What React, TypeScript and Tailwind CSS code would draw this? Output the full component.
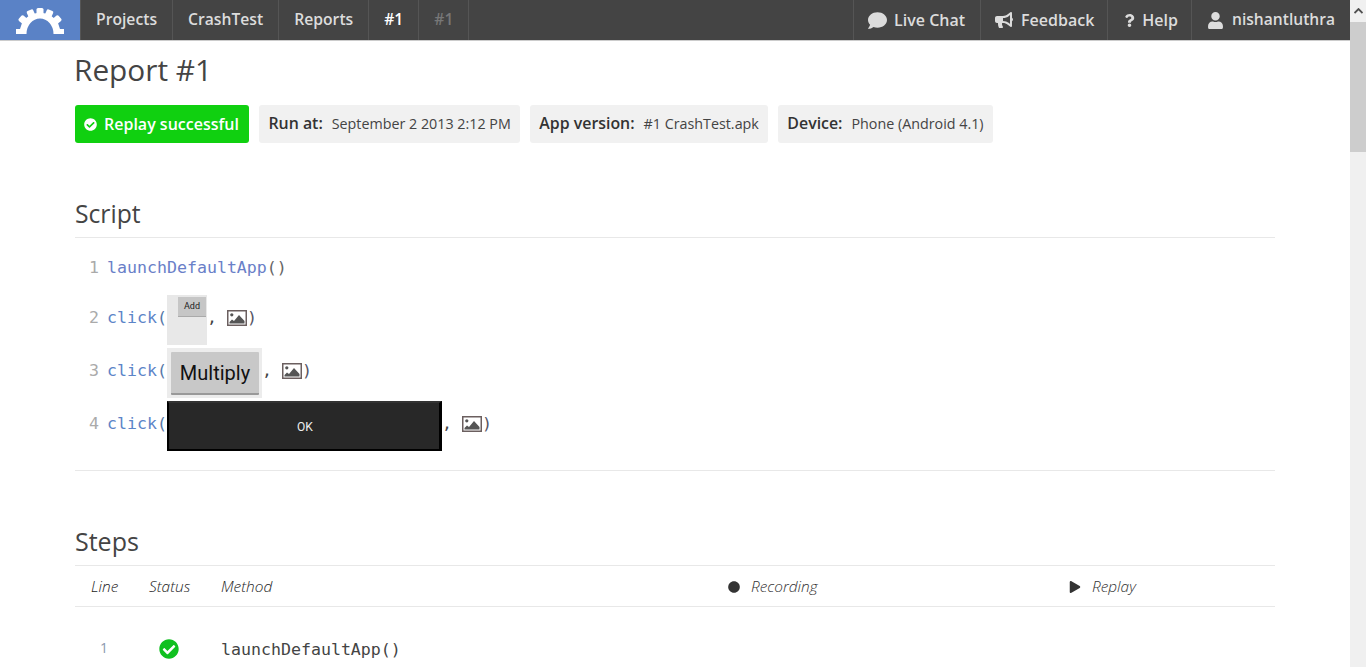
import { FaBullhorn, FaCheckCircle, FaCircle, FaComment, FaPlay, FaQuestion, FaUser } from 'react-icons/fa';
import type { ReactNode } from 'react';

const sans = { fontFamily: '"Open Sans", sans-serif' };

function GearLogo() {
  const teeth = [0, -24, 24, -50, 50];
  return (
    <svg width="48" height="26" viewBox="0 0 48 26" className="text-white" fill="currentColor">
      <path d="M0 26 V21 H4 L6 15 A21 21 0 0 1 42 15 L44 21 H48 V26 H37.5 A13.5 15.5 0 0 0 10.5 26 Z" />
      {teeth.map((a) => (
        <rect key={a} x="-3.5" y="-26" width="7" height="9" rx="1.5" transform={`translate(24 26) rotate(${a})`} />
      ))}
    </svg>
  );
}

function PictureIcon() {
  return (
    <svg width="20" height="16" viewBox="0 0 20 16" className="shrink-0">
      <rect x="0.75" y="0.75" width="18.5" height="14.5" fill="#fff" stroke="#6b5f5f" strokeWidth="1.5" />
      <circle cx="4.8" cy="4.8" r="1.6" fill="#555" />
      <path d="M2.5 13.5 L2.5 12 L5 9.5 L7 11 L12 5 L17.5 11 L17.5 13.5 Z" fill="#555" />
    </svg>
  );
}

function NavItem({ children, muted, white, className = 'px-[15px]' }: { children: ReactNode; muted?: boolean; white?: boolean; className?: string }) {
  return (
    <div
      className={`flex h-10 items-center border-l border-[#555] font-semibold ${className} ${
        muted ? 'text-[#777]' : white ? 'text-white' : 'text-[#dcdcdc]'
      }`}
    >
      {children}
    </div>
  );
}

function Chip({ label, value }: { label: string; value: string }) {
  return (
    <div className="flex h-[38px] items-center rounded-[3px] bg-[#f1f1f1] pl-[9.5px] pr-[9px] text-[14.3px] text-[#444]">
      <span className="mr-[9px] text-[15.9px] font-semibold text-[#333]">{label}</span>
      {value}
    </div>
  );
}

function ScriptRow({ line, children, lift = true }: { line: number; children: ReactNode; lift?: boolean }) {
  return (
    <div className="flex items-center">
      <span className={`w-[32px] pr-2 text-right text-[#aaa] ${lift ? 'mb-[4px]' : 'mt-[2px]'}`}>{line}</span>
      {children}
    </div>
  );
}

function ClickArgs({ line, thumb }: { line: number; thumb: ReactNode }) {
  return (
    <ScriptRow line={line}>
      <span className="mb-[4px] text-[#5c84c8]">click</span>
      <span className="mb-[4px] w-[10px] text-[#5577a8]">(</span>
      {thumb}
      <span className="mb-[4px] text-[#444]">,</span>
      <span className="mb-[4px] ml-[10px]">
        <PictureIcon />
      </span>
      <span className="mb-[4px] text-[#556]">)</span>
    </ScriptRow>
  );
}

export default function App() {
  return (
    <div className="flex h-[667px] w-[1366px] overflow-hidden bg-white text-[#444]" style={sans}>
      <div className="h-full w-[1350px] overflow-hidden">
        <nav className="flex h-[41px] justify-between border-b border-[#ccc] bg-[#444]">
          <div className="flex text-[15.7px]">
            <div className="flex h-10 w-20 items-center justify-center bg-[#5a82c6] pt-[1px]">
              <GearLogo />
            </div>
            <NavItem>Projects</NavItem>
            <NavItem>CrashTest</NavItem>
            <NavItem>Reports</NavItem>
            <NavItem white>#1</NavItem>
            <NavItem muted className="border-r px-[15px]">#1</NavItem>
          </div>
          <div className="flex text-[16px]">
            <NavItem className="gap-[7px] pl-[14px] pr-[15px]">
              <FaComment className="text-[19px]" />
              Live Chat
            </NavItem>
            <NavItem className="gap-[8px] pl-[14px] pr-[13px]">
              <FaBullhorn className="text-[18px]" />
              Feedback
            </NavItem>
            <NavItem className="gap-[6px] pl-[15px] pr-[13px]">
              <FaQuestion className="text-[13px]" />
              Help
            </NavItem>
            <NavItem className="gap-[8px] pl-[15px] pr-[15px] text-[15.6px]">
              <FaUser className="text-[17px]" />
              nishantluthra
            </NavItem>
          </div>
        </nav>

        <main className="mx-auto w-[1200px]">
          <h1 className="-ml-[1px] mt-[7px] text-[29.8px] leading-[44px] text-[#444]">Report #1</h1>

          <div className="mt-[13px] flex gap-[10px]">
            <div className="flex h-[38px] items-center gap-[7px] rounded-[3px] bg-[#10d010] pl-[9px] pr-[10px] text-[16px] font-semibold text-white">
              <FaCheckCircle className="text-[13px]" />
              Replay successful
            </div>
            <Chip label="Run at:" value="September 2 2013 2:12 PM" />
            <Chip label="App version:" value="#1 CrashTest.apk" />
            <Chip label="Device:" value="Phone (Android 4.1)" />
          </div>

          <h2 className="mt-[53px] border-b border-[#e8e8e8] pb-[5px] text-[24.7px] leading-[36px] text-[#444]">Script</h2>

          <div
            className="flex flex-col gap-[3px] border-b border-[#e8e8e8] pb-[19px] pt-[10px] text-[16.6px]"
            style={{ fontFamily: '"DejaVu Sans Mono", monospace' }}
          >
            <ScriptRow line={1} lift={false}>
              <span className="flex h-[38px] items-center pt-[2px]">
                <span className="text-[#6a80c8]">launchDefaultApp</span>
                <span className="text-[#666]">()</span>
              </span>
            </ScriptRow>
            <div className="mt-[6px] flex flex-col gap-[3px]">
              <ClickArgs
                line={2}
                thumb={
                  <div className="flex h-[50px] w-10 justify-end bg-[#e8e8e8] pr-[1px] pt-[2px]" style={{ fontFamily: 'Roboto, sans-serif' }}>
                    <div className="flex h-5 w-7 items-center justify-center border-b border-[#aaa] bg-[#c6c6c6] text-[9px] text-[#222]">Add</div>
                  </div>
                }
              />
              <ClickArgs
                line={3}
                thumb={
                  <div className="flex h-[50px] w-[95px] bg-[#ececec] pb-[3px] pl-[4px] pr-[3px] pt-[4px]" style={{ fontFamily: 'Roboto, sans-serif' }}>
                    <div className="flex flex-1 items-center justify-center rounded-[1px] border-b-2 border-[#999] bg-[#c8c8c8] text-[20px] text-[#111]">
                      Multiply
                    </div>
                  </div>
                }
              />
              <ClickArgs
                line={4}
                thumb={
                  <div
                    className="flex h-[50px] w-[275px] items-center justify-center border-2 border-r-[3px] border-black border-t-[#333] bg-[#282828] pl-[2px] pt-[1px] text-[12px] text-[#eee]"
                    style={{ fontFamily: 'Roboto, sans-serif' }}
                  >
                    OK
                  </div>
                }
              />
            </div>
          </div>

          <h2 className="mt-[52px] border-b border-[#e8e8e8] pb-[6px] text-[25px] leading-[36px] text-[#444]">Steps</h2>

          <div className="grid h-[41px] grid-cols-[74px_72px_507px_341px_1fr] items-center border-b border-[#e8e8e8] pt-[2px] text-[15.4px] font-light italic text-[#222]">
            <span className="pl-[16px]">Line</span>
            <span>Status</span>
            <span>Method</span>
            <span className="flex items-center gap-[11px] text-[#333]">
              <FaCircle className="text-[12px]" />
              Recording
            </span>
            <span className="flex items-center gap-[11px] text-[#333]">
              <FaPlay className="text-[12px]" />
              Replay
            </span>
          </div>

          <div className="mt-[30px] grid grid-cols-[74px_72px_1fr] items-center">
            <span className="mb-[5px] pl-[25px] text-[14px] text-[#8c99ad]">1</span>
            <FaCheckCircle className="mb-[2px] ml-[10px] text-[20px] text-[#10c020]" />
            <span className="text-[16.6px] text-[#444]" style={{ fontFamily: '"DejaVu Sans Mono", monospace' }}>
              launchDefaultApp()
            </span>
          </div>
        </main>
      </div>

      <div className="flex h-full w-4 flex-col bg-[#f0f0f0]">
        <div className="flex h-[22px] items-center justify-center">
          <svg width="9" height="6" viewBox="0 0 9 6">
            <path d="M0.5 5 L4.5 1 L8.5 5" fill="none" stroke="#505050" strokeWidth="1.8" />
          </svg>
        </div>
        <div className="h-[130px] bg-[#cdcdcd]" />
      </div>
    </div>
  );
}
